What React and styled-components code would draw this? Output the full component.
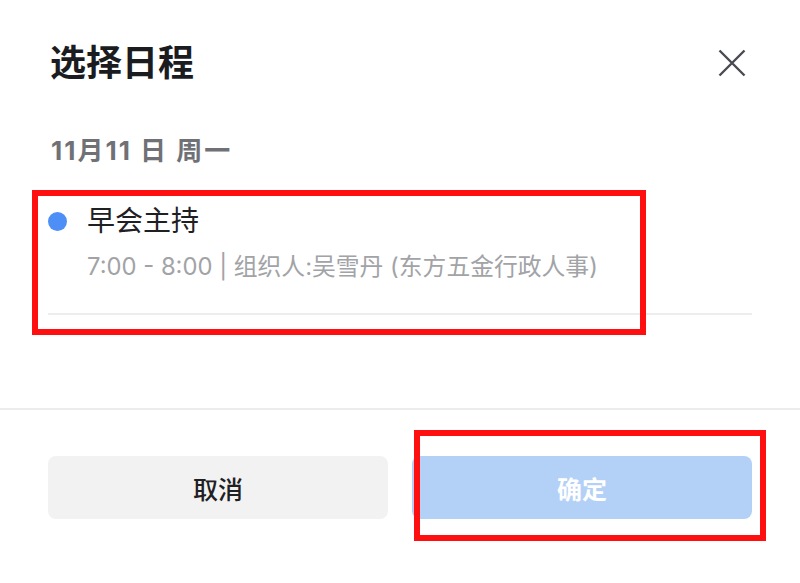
import React from 'react'
import styled, { createGlobalStyle } from 'styled-components'

const GlobalStyle = createGlobalStyle`
    html, body {
        margin: 0;
        padding: 0;
        background: #ffffff;
    }
    body {
        font-family: "Inter", "Noto Sans CJK SC", sans-serif;
        -webkit-font-smoothing: antialiased;
    }
`

const Sheet = styled.div`
    position: relative;
    width: 800px;
    height: 583px;
    display: flex;
    flex-direction: column;
    background: #ffffff;
    overflow: hidden;
`

const Header = styled.header`
    height: 132px;
    padding: 0 52px 6px 50px;
    display: flex;
    justify-content: space-between;
    align-items: center;
    box-sizing: border-box;
`

const Title = styled.h1`
    margin: 0;
    font-size: 36px;
    font-weight: 700;
    color: #1b1c1f;
    line-height: 1;
`

const CloseButton = styled.button`
    width: 32px;
    height: 32px;
    padding: 0;
    border: none;
    background: none;
    display: flex;
    align-items: center;
    justify-content: center;
    cursor: pointer;
`

const Body = styled.section`
    padding: 0 48px;
    height: 276px;
    display: flex;
    flex-direction: column;
`

const DateLabel = styled.div`
    padding-left: 3px;
    margin-top: 4px;
    font-size: 26px;
    font-weight: 700;
    letter-spacing: 2px;
    color: #6f7176;
    line-height: 30px;
`

const EventItem = styled.div`
    margin-top: 40px;
    display: flex;
    gap: 20px;
    padding-bottom: 33px;
    border-bottom: 2px solid #ededed;
`

const Dot = styled.span`
    flex: none;
    width: 19px;
    height: 19px;
    margin-top: 6px;
    border-radius: 50%;
    background: ${p => p.color};
`

const EventText = styled.div`
    display: flex;
    flex-direction: column;
    gap: 17px;
`

const EventTitle = styled.div`
    font-size: 28px;
    color: #1f2023;
    line-height: 30px;
`

const EventMeta = styled.div`
    font-size: 23.8px;
    color: #a2a3a6;
    line-height: 27px;
`

const Footer = styled.footer`
    flex: 1;
    border-top: 2px solid #ececec;
    padding: 46px 48px 0;
    display: grid;
    grid-template-columns: 1fr 1fr;
    gap: 24px;
    align-items: start;
`

const Button = styled.button`
    height: 63px;
    border: none;
    border-radius: 8px;
    font-family: inherit;
    font-size: 25px;
    font-weight: ${p => (p.primary ? 700 : 500)};
    color: ${p => (p.primary ? '#ffffff' : '#1f2023')};
    background: ${p => (p.primary ? '#b3d0f6' : '#f2f2f2')};
    cursor: pointer;
`

const Highlight = styled.div`
    position: absolute;
    box-sizing: border-box;
    border: 6px solid #fe1010;
    pointer-events: none;
`

const CloseIcon = () => (
    <svg width="28" height="28" viewBox="0 0 28 28">
        <path d="M1.5 1.5 L26.5 26.5 M26.5 1.5 L1.5 26.5" stroke="#4a4b52" strokeWidth="2.4" fill="none" />
    </svg>
)

const App = () => {
    return (
        <>
            <GlobalStyle />
            <Sheet>
                <Header>
                    <Title>选择日程</Title>
                    <CloseButton aria-label="关闭"><CloseIcon /></CloseButton>
                </Header>
                <Body>
                    <DateLabel>11月11 日 周一</DateLabel>
                    <EventItem>
                        <Dot color="#4d8ff6" />
                        <EventText>
                            <EventTitle>早会主持</EventTitle>
                            <EventMeta>7:00 - 8:00 | 组织人:吴雪丹 (东方五金行政人事)</EventMeta>
                        </EventText>
                    </EventItem>
                </Body>
                <Footer>
                    <Button>取消</Button>
                    <Button primary>确定</Button>
                </Footer>
                <Highlight style={{ left: 32, top: 190, width: 614, height: 145 }} />
                <Highlight style={{ left: 414, top: 430, width: 352, height: 111 }} />
            </Sheet>
        </>
    )
}

export default App
